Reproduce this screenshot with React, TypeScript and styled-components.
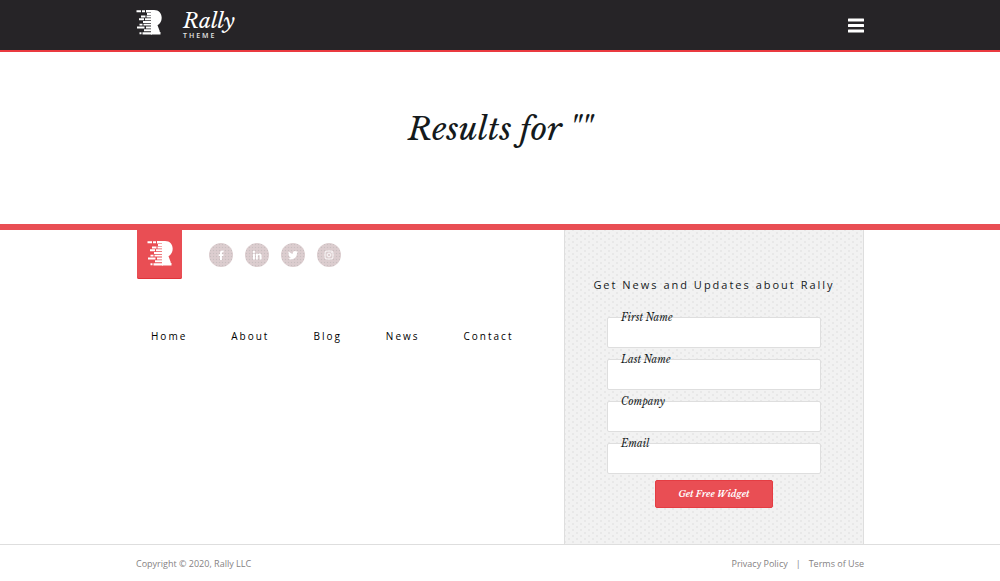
import React from "react";
import styled, { createGlobalStyle } from "styled-components";

const red = "#e94e54";
const sans = '"Open Sans", "Noto Sans", sans-serif';
const serif = '"Libre Baskerville", "Liberation Serif", serif';

const GlobalStyle = createGlobalStyle`
  *, *::before, *::after { box-sizing: border-box; }
  body { margin: 0; background: #fff; color: #151a1c; font-family: ${sans}; }
  a { color: inherit; text-decoration: none; }
`;

const Container = styled.div`
  width: calc(100% - 32px);
  max-width: 728px;
  margin: 0 auto;
`;

const Header = styled.header`
  background: #262427;
  border-bottom: 2px solid #ea3a40;
`;

const HeaderRow = styled(Container)`
  display: flex;
  align-items: center;
  justify-content: space-between;
  height: 50px;
`;

const Brand = styled.a`
  display: flex;
  align-items: center;
  gap: 21px;
  color: #fff;
  padding-bottom: 5px;
`;

const BrandText = styled.span`
  display: flex;
  flex-direction: column;
  padding-top: 4px;
`;

const BrandName = styled.span`
  font: italic 21px/22px ${serif};
`;

const BrandSub = styled.span`
  font: 600 7px/7px ${sans};
  letter-spacing: 2px;
  color: #e4e4e4;
`;

const MenuButton = styled.button`
  display: flex;
  padding: 0;
  border: 0;
  background: none;
  color: #fff;
  cursor: pointer;
`;

const Hero = styled.main`
  padding: 49px 16px 67px;
`;

const Title = styled.h1`
  margin: 0;
  text-align: center;
  font: italic 32px/56px ${serif};
`;

const Footer = styled.footer`
  border-top: 6px solid ${red};
`;

const FooterColumns = styled(Container)`
  display: flex;
  flex-wrap: wrap;
  align-items: stretch;
`;

const FooterMain = styled.div`
  flex: 1 1 400px;
`;

const SocialRow = styled.div`
  display: flex;
  align-items: center;
  gap: 27px;
`;

const LogoTile = styled.a`
  display: flex;
  justify-content: center;
  width: 45px;
  height: 49px;
  padding-top: 11px;
  margin-left: 1px;
  border-radius: 0 0 2px 2px;
  background: ${red};
  box-shadow: inset 0 -1px #e13339;
  color: #fff;
`;

const SocialLinks = styled.div`
  display: flex;
  gap: 12px;
`;

const SocialLink = styled.a`
  display: flex;
  align-items: center;
  justify-content: center;
  width: 24px;
  height: 24px;
  border-radius: 50%;
  color: #fff;
  background: radial-gradient(circle, #c9bfc0 0 20%, #dccdcf 50%) 0 0 / 3px 3px;
`;

const Nav = styled.nav`
  display: flex;
  flex-wrap: wrap;
  gap: 44px;
  padding: 48px 15px;
  font-size: 10px;
  line-height: 18px;
  font-weight: 500;
  letter-spacing: 2px;
  color: #000;
`;

const SignupForm = styled.form`
  display: flex;
  flex-direction: column;
  align-items: center;
  flex: 0 1 300px;
  min-height: 313px;
  padding: 46px 24px 36px;
  border: solid #dedede;
  border-width: 0 1px;
  background:
    radial-gradient(circle, #e8e8e8 1px, transparent 1px) 0 0 / 8px 6px,
    radial-gradient(circle, #e8e8e8 1px, transparent 1px) 4px 3px / 8px 6px,
    #f2f2f2;
`;

const FormTitle = styled.h2`
  margin: 0 0 23px;
  font-size: 11px;
  line-height: 18px;
  font-weight: 400;
  letter-spacing: 2px;
  white-space: nowrap;
`;

const Field = styled.div`
  position: relative;
  width: 214px;
  margin-bottom: 11px;

  &:last-of-type { margin-bottom: 6px; }
`;

const FieldLabel = styled.label`
  position: absolute;
  top: -7px;
  left: 14px;
  font: italic 10px/16px ${serif};
`;

const FieldInput = styled.input`
  display: block;
  width: 100%;
  height: 31px;
  padding: 0 12px;
  border: 1px solid #dedede;
  border-radius: 2px;
  background: #fff;
`;

const SubmitButton = styled.button`
  height: 28px;
  padding: 0 22px;
  border: 1px solid #e43d43;
  border-radius: 2px;
  background: ${red};
  color: #fff;
  font: italic bold 9px/16px ${serif};
  cursor: pointer;
`;

const Legal = styled.div`
  border-top: 1px solid #dedede;
`;

const LegalRow = styled(Container)`
  display: flex;
  justify-content: space-between;
  padding: 10px 0 9px;
  font-size: 9px;
  line-height: 17px;
  color: #858283;
`;

const LegalLinks = styled.div`
  display: flex;
  gap: 8px;
`;

const RallyMark = () => (
  <svg width="26" height="25" viewBox="0 0 26 25" fill="currentColor" aria-hidden="true">
    <path d="M15 0h3c5 0 7.700 3.500 7.700 7.800 0 3.500-1.700 6-4.200 7.400l2.200 5.800v1h.8v2.500H15z" />
    <path d="M.500 .200h4.500v2H.500zM6 .200h3v2H6zM10 0h6v2.500h-6zM11 3h5v2h-5zM5 5.500h4.500v2H5zM10.500 5.500H16v2h-5.500zM3 8.300h5v2H3zM9 8.300h7v2H9zM7 11h9v2H7zM3.500 13.700h3v1.800h-3zM7.500 13.700H16v1.800H7.500zM1 16.500h7.500v2H1zM10 16.500h6v2h-6zM8 19.300h8v2H8zM3.500 22.300h2v2h-2zM6.500 22.300H16v2.200H6.500z" />
  </svg>
);

const MenuIcon = () => (
  <svg width="16" height="15" viewBox="0 0 16 15" fill="currentColor" aria-hidden="true">
    <rect y="0.500" width="16" height="3" rx=".5" />
    <rect y="6" width="16" height="3" rx=".5" />
    <rect y="11.500" width="16" height="3" rx=".5" />
  </svg>
);

const socials = [
  { name: "Facebook", icon: <path d="M4 10V6H2.700V4.200H4V3c0-1.700 1-2.500 2.400-2.500h1.200v1.700h-.8c-.6 0-.9.300-.9.900v1.100h1.700L7.300 6H5.900v4z" /> },
  { name: "LinkedIn", icon: <path d="M1 3.700h1.900V9.500H1zM1.950.800a1.100 1.100 0 1 1 0 2.200 1.100 1.100 0 0 1 0-2.200zM4 3.700h1.800v.8c.4-.6 1-.95 1.800-.95 1.500 0 2 1 2 2.500V9.500H7.700V6.400c0-.8-.2-1.300-.9-1.300s-1 .500-1 1.300v3.100H4z" /> },
  { name: "Twitter", icon: <path d="M10 2.100l-1 1c0 4-3 6.300-5.900 6.300A6 6 0 0 1 .1 8.500c1 .1 2-.2 2.900-.8-.9 0-1.600-.6-1.900-1.400h.9C1 6.100.400 5.200.400 4.200l.9.200C.400 3.700.200 2.500.700 1.600c1.100 1.300 2.500 2 4.200 2.100C4.600 2.200 5.600 1 7 1c.6 0 1.100.200 1.500.6l1.300-.5-.9 1.200z" /> },
  {
    name: "Instagram",
    icon: (
      <g fill="none" stroke="currentColor" strokeWidth=".9">
        <rect x="1" y="1" width="8" height="8" rx="2" />
        <circle cx="5" cy="5" r="1.900" />
        <circle cx="7.300" cy="2.700" r=".2" />
      </g>
    ),
  },
];

const navItems = ["Home", "About", "Blog", "News", "Contact"];

const fields = [
  { id: "first-name", label: "First Name", type: "text" },
  { id: "last-name", label: "Last Name", type: "text" },
  { id: "company", label: "Company", type: "text" },
  { id: "email", label: "Email", type: "email" },
];

export default function App() {
  return (
    <>
      <GlobalStyle />
      <Header>
        <HeaderRow>
          <Brand href="#">
            <RallyMark />
            <BrandText>
              <BrandName>Rally</BrandName>
              <BrandSub>THEME</BrandSub>
            </BrandText>
          </Brand>
          <MenuButton type="button" aria-label="Open menu">
            <MenuIcon />
          </MenuButton>
        </HeaderRow>
      </Header>
      <Hero>
        <Title>Results for ""</Title>
      </Hero>
      <Footer>
        <FooterColumns>
          <FooterMain>
            <SocialRow>
              <LogoTile href="#" aria-label="Rally home">
                <RallyMark />
              </LogoTile>
              <SocialLinks>
                {socials.map((social) => (
                  <SocialLink key={social.name} href="#" aria-label={social.name}>
                    <svg width="10" height="10" viewBox="0 0 10 10" fill="currentColor" aria-hidden="true">
                      {social.icon}
                    </svg>
                  </SocialLink>
                ))}
              </SocialLinks>
            </SocialRow>
            <Nav>
              {navItems.map((item) => (
                <a key={item} href="#">{item}</a>
              ))}
            </Nav>
          </FooterMain>
          <SignupForm>
            <FormTitle>Get News and Updates about Rally</FormTitle>
            {fields.map((field) => (
              <Field key={field.id}>
                <FieldInput id={field.id} type={field.type} />
                <FieldLabel htmlFor={field.id}>{field.label}</FieldLabel>
              </Field>
            ))}
            <SubmitButton type="submit">Get Free Widget</SubmitButton>
          </SignupForm>
        </FooterColumns>
        <Legal>
          <LegalRow>
            <span>Copyright © 2020, Rally LLC</span>
            <LegalLinks>
              <a href="#">Privacy Policy</a>
              <span>|</span>
              <a href="#">Terms of Use</a>
            </LegalLinks>
          </LegalRow>
        </Legal>
      </Footer>
    </>
  );
}
